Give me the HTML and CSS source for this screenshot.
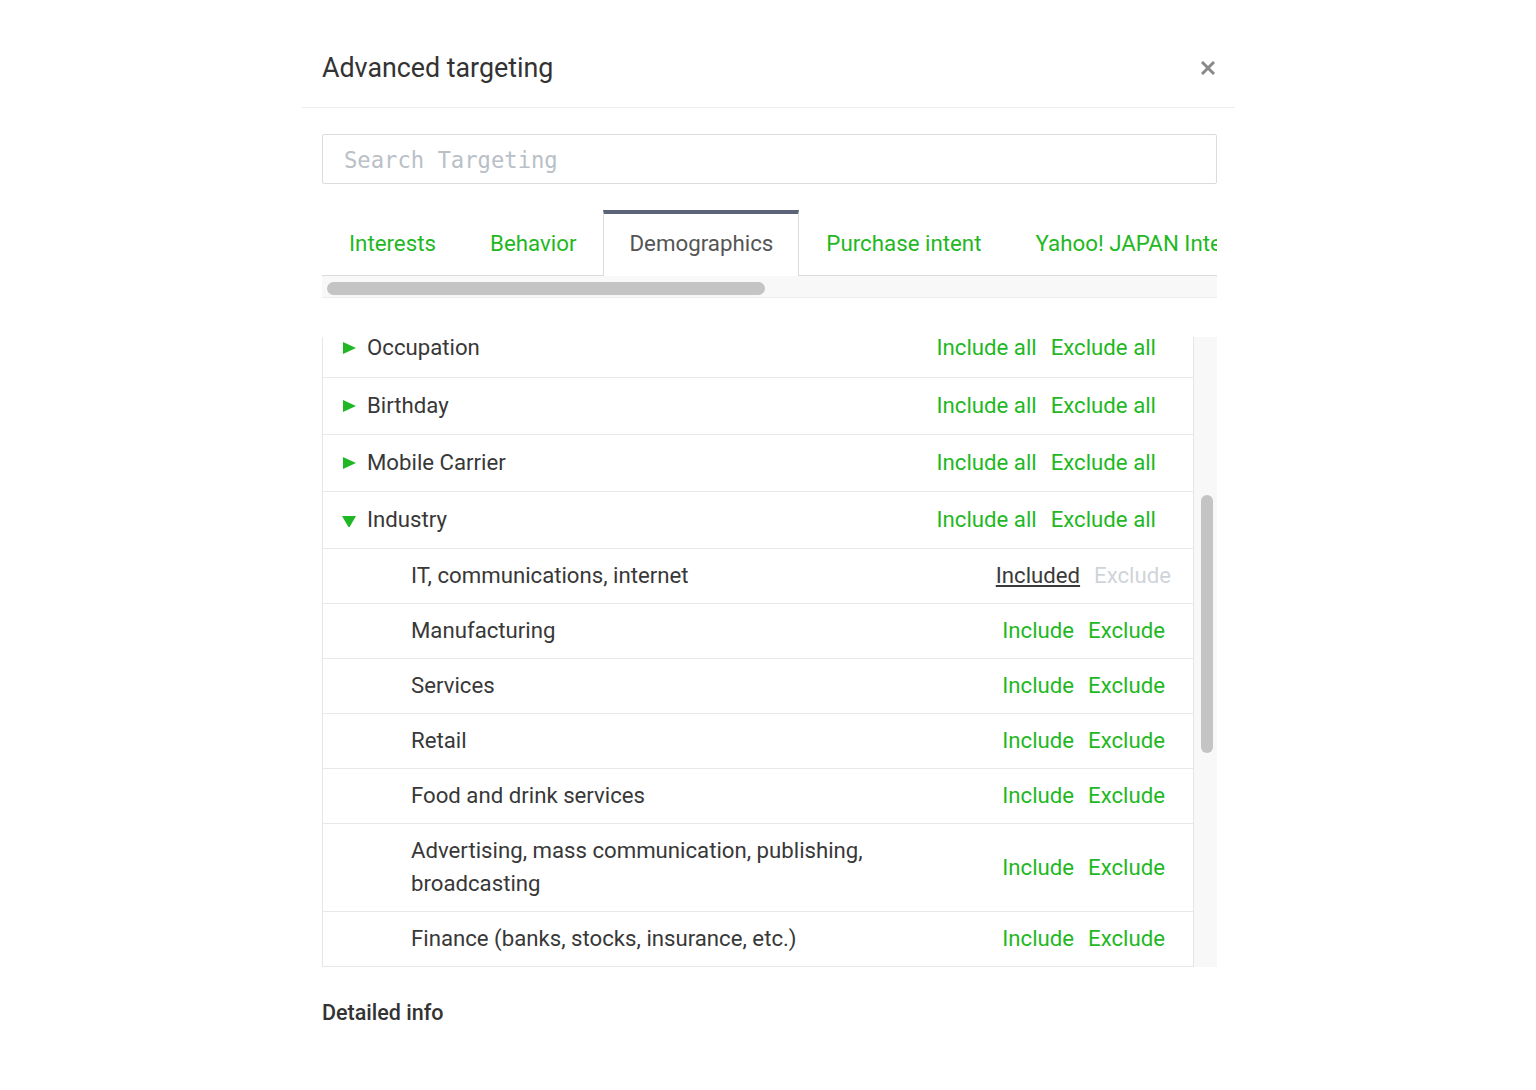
FILE: index.html
```html
<!DOCTYPE html>
<html>
<head>
<meta charset="utf-8">
<title>Advanced targeting</title>
<link rel="stylesheet" href="styles.css">
</head>
<body>
<div class="modal">
  <div class="modal-head">
    <h2 class="modal-title">Advanced targeting</h2>
    <span class="close">
      <svg width="14" height="14" viewBox="0 0 14 14"><path d="M2 2 L12 12 M12 2 L2 12" stroke="#8a8a8a" stroke-width="3" stroke-linecap="square"/></svg>
    </span>
  </div>

  <div class="modal-body">
    <div class="search">
      <input type="text" placeholder="Search Targeting">
    </div>

    <div class="tabs-wrap">
      <ul class="tabs">
        <li class="tab">Interests</li>
        <li class="tab">Behavior</li>
        <li class="tab active">Demographics</li>
        <li class="tab">Purchase intent</li>
        <li class="tab">Yahoo! JAPAN Interest Match</li>
      </ul>
      <div class="hscroll"><div class="hthumb"></div></div>
    </div>

    <div class="list">
      <div class="list-inner">
        <div class="row cat">
          <span class="arrow"><svg width="14" height="14" viewBox="0 0 14 14"><polygon points="1,1 14,7 1,13" fill="#1fb824"/></svg></span>
          <span class="label">Occupation</span>
          <span class="actions"><a>Include all</a><a>Exclude all</a></span>
        </div>
        <div class="row cat">
          <span class="arrow"><svg width="14" height="14" viewBox="0 0 14 14"><polygon points="1,1 14,7 1,13" fill="#1fb824"/></svg></span>
          <span class="label">Birthday</span>
          <span class="actions"><a>Include all</a><a>Exclude all</a></span>
        </div>
        <div class="row cat">
          <span class="arrow"><svg width="14" height="14" viewBox="0 0 14 14"><polygon points="1,1 14,7 1,13" fill="#1fb824"/></svg></span>
          <span class="label">Mobile Carrier</span>
          <span class="actions"><a>Include all</a><a>Exclude all</a></span>
        </div>
        <div class="row cat">
          <span class="arrow"><svg width="14" height="14" viewBox="0 0 14 14"><polygon points="0,3 14,3 7,15" fill="#1fb824"/></svg></span>
          <span class="label">Industry</span>
          <span class="actions"><a>Include all</a><a>Exclude all</a></span>
        </div>
        <div class="row sub">
          <span class="label">IT, communications, internet</span>
          <span class="actions picked"><a class="included">Included</a><a class="muted">Exclude</a></span>
        </div>
        <div class="row sub">
          <span class="label">Manufacturing</span>
          <span class="actions"><a>Include</a><a>Exclude</a></span>
        </div>
        <div class="row sub">
          <span class="label">Services</span>
          <span class="actions"><a>Include</a><a>Exclude</a></span>
        </div>
        <div class="row sub">
          <span class="label">Retail</span>
          <span class="actions"><a>Include</a><a>Exclude</a></span>
        </div>
        <div class="row sub">
          <span class="label">Food and drink services</span>
          <span class="actions"><a>Include</a><a>Exclude</a></span>
        </div>
        <div class="row sub">
          <span class="label wrap">Advertising, mass communication, publishing, broadcasting</span>
          <span class="actions"><a>Include</a><a>Exclude</a></span>
        </div>
        <div class="row sub">
          <span class="label">Finance (banks, stocks, insurance, etc.)</span>
          <span class="actions"><a>Include</a><a>Exclude</a></span>
        </div>
      </div>
      <div class="vscroll"><div class="vthumb"></div></div>
    </div>

    <h4 class="detail">Detailed info</h4>
  </div>
</div>
</body>
</html>
```

FILE: styles.css
```css
body { margin:0; background:#fff; font-family:Roboto, "Liberation Sans", Arial, sans-serif; color:#333; }

.modal { width:933px; margin:28px 0 0 302px; }
.modal-head { height:79px; display:flex; align-items:center; justify-content:space-between; padding:0 20px; border-bottom:1px solid #eceeee; }
.modal-title { margin:0; font-size:26.8px; font-weight:400; color:#333; }
.close { display:flex; margin-right:0; }

.modal-body { padding:0 18px 0 20px; }

.search { margin-top:26px; }
.search input { box-sizing:border-box; width:100%; height:50px; border:1px solid #dcdcdc; border-radius:2px; padding:2px 0 0 21px; font-family:"DejaVu Sans Mono", "Liberation Mono", monospace; font-size:22.2px; color:#333; outline:none; }
.search input::placeholder { color:#b9c0c7; }

.tabs-wrap { margin-top:26px; overflow:hidden; }
.tabs { list-style:none; margin:0; padding:0; display:flex; white-space:nowrap; border-bottom:1px solid #dcdcdc; height:65px; }
.tab { flex:none; box-sizing:border-box; height:66px; padding:0 27px 4px; display:flex; align-items:center; font-size:22.3px; color:#1fb824; border-top:4px solid transparent; }
.tab.active { color:#555; background:#fff; border-top-color:#5b6478; border-left:1px solid #dcdcdc; border-right:1px solid #dcdcdc; padding:0 25px 4px 25px; }

.hscroll { height:21px; background:#f8f8f8; border-bottom:1px solid #ededed; position:relative; }
.hthumb { position:absolute; left:5px; top:6px; width:438px; height:13px; border-radius:7px; background:#c4c4c4; }

.list { margin-top:39px; height:630px; display:flex; border-left:1px solid #e6e6e6; }
.list-inner { flex:1; overflow:hidden; }
.list-inner .row:first-child { margin-top:-17px; }
.vscroll { width:23px; background:#f8f8f8; border-left:1px solid #e6e6e6; position:relative; }
.vthumb { position:absolute; left:7px; top:158px; width:12px; height:258px; border-radius:6px; background:#c4c4c4; }

.row { display:flex; align-items:center; border-bottom:1px solid #e8e8e8; font-size:22.2px; line-height:33px; }
.row.cat { padding:11px 37px 12px 19px; }
.row.cat:first-child { padding-bottom:13px; }
.row.sub { padding:10px 28px 11px 88px; }
.arrow { width:25px; display:flex; align-items:center; }
.label { flex:1; color:#383838; }
.label.wrap { flex:none; width:470px; }
.actions { margin-left:auto; display:flex; gap:14px; white-space:nowrap; }
.actions a { color:#1fb824; }
.actions.picked { margin-right:-6px; }
.actions a.included { color:#3a3a3a; text-decoration:underline; }
.actions a.muted { color:#cfd4da; }

.detail { margin:33px 0 0; font-size:21.5px; font-weight:500; color:#333; }
```
